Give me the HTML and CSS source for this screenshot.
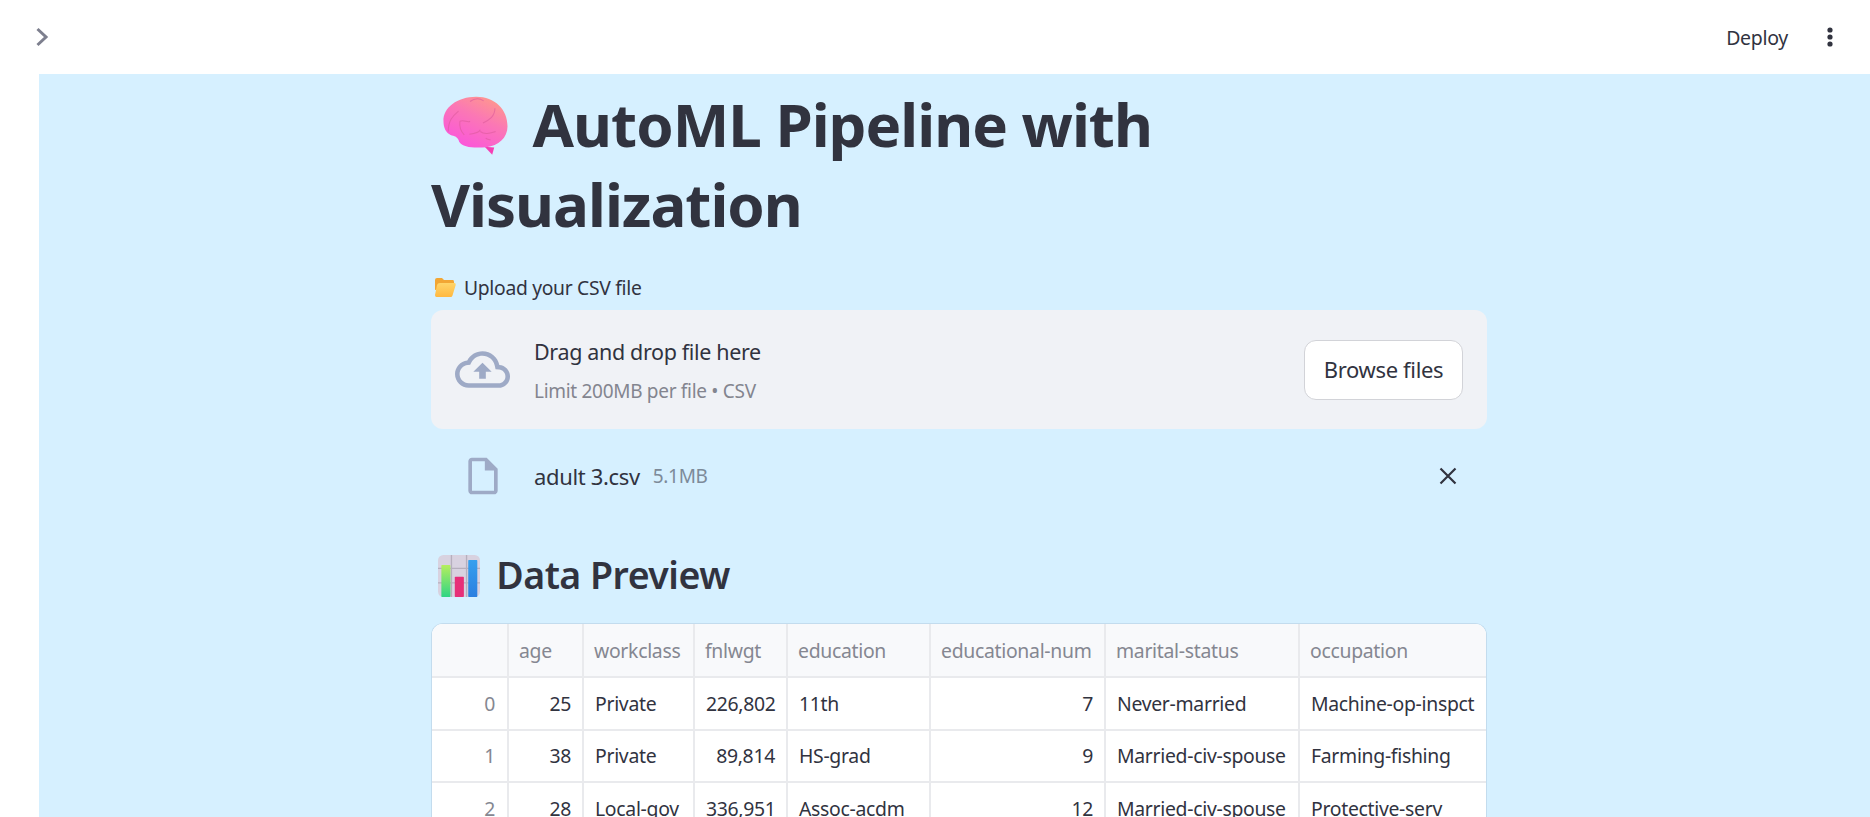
FILE: index.html
```html
<!DOCTYPE html>
<html lang="en">
<head>
<meta charset="UTF-8">
<meta name="viewport" content="width=device-width, initial-scale=1.0">
<title>AutoML Pipeline with Visualization</title>
<link rel="stylesheet" href="styles.css">
</head>
<body>

<header class="topbar">
  <svg class="chevron" viewBox="0 0 14 20" width="14" height="20">
    <path d="M2.5 2 L11 10 L2.5 18" fill="none" stroke="#7d7f8e" stroke-width="3"/>
  </svg>
  <div class="topbar-right">
    <span class="deploy">Deploy</span>
    <svg class="kebab" viewBox="0 0 8 22" width="8" height="22">
      <circle cx="4" cy="4" r="2.6" fill="#31333f"/>
      <circle cx="4" cy="11" r="2.6" fill="#31333f"/>
      <circle cx="4" cy="18" r="2.6" fill="#31333f"/>
    </svg>
  </div>
</header>

<main class="main">
  <div class="content">
    <h1 class="title">
      <svg class="brain" viewBox="40 20 196 182" width="67" height="62">
        <defs>
          <linearGradient id="brainFill" x1="0.9" y1="0" x2="0.3" y2="1">
            <stop offset="0" stop-color="#ff9e86"/>
            <stop offset="0.45" stop-color="#fb78b4"/>
            <stop offset="1" stop-color="#fb55dc"/>
          </linearGradient>
        </defs>
        <path d="M165 175 L193 177 L187 198 Z" fill="#f53fb4"/>
        <path d="M44 100 C42 60 85 28 140 28 C195 28 232 65 232 115 C232 150 205 172 170 176 C135 178 100 178 90 160 C87 145 75 143 65 140 C52 135 44 120 44 100 Z" fill="url(#brainFill)"/>
        <g fill="none" stroke="#dd5a9c" stroke-width="3" opacity="0.6">
          <path d="M122 42 C135 32 150 32 162 40"/>
          <path d="M58 130 C58 100 70 85 88 70"/>
          <path d="M195 62 C195 85 180 95 160 105"/>
          <path d="M92 100 C105 95 115 105 122 100"/>
          <path d="M92 100 C90 120 95 130 105 140"/>
          <path d="M120 138 C145 135 150 130 152 125 M152 130 C165 140 180 135 197 130"/>
          <path d="M168 150 C175 155 178 152 182 155"/>
        </g>
      </svg>
      AutoML Pipeline with Visualization
    </h1>

    <div class="upload-label">
      <svg class="folder" viewBox="0 0 21 19" width="21" height="19">
        <defs>
          <linearGradient id="folderFill" x1="0" y1="0" x2="0" y2="1">
            <stop offset="0" stop-color="#ffd56a"/>
            <stop offset="1" stop-color="#ffb840"/>
          </linearGradient>
        </defs>
        <path d="M0 2 Q0 0 2 0 L7 0 L9 2 L18 2 Q19 2 19 4 L19 8 L0 12 Z" fill="#f2a634"/>
        <path d="M5 5 L19.5 5 Q21 5 20.7 7 L17.5 17.5 Q17.2 19 15.5 19 L1.5 19 Q0 19 0 17 L2 7 Q2.5 5 5 5 Z" fill="url(#folderFill)"/>
      </svg>
      <span>Upload your CSV file</span>
    </div>

    <section class="dropzone">
      <svg class="cloud" viewBox="0 0 24 24" width="55" height="55">
        <path fill="#9eaac6" d="M19.35 10.04C18.67 6.59 15.64 4 12 4 9.11 4 6.6 5.64 5.35 8.04 2.34 8.36 0 10.91 0 14c0 3.31 2.69 6 6 6h13c2.76 0 5-2.24 5-5 0-2.64-2.05-4.78-4.65-4.96zM19 18H6c-2.21 0-4-1.79-4-4 0-2.05 1.53-3.76 3.56-3.97l1.07-.11.5-.95C8.08 7.14 9.94 6 12 6c2.62 0 4.88 1.86 5.39 4.43l.3 1.5 1.53.11c1.56.1 2.78 1.41 2.78 2.96 0 1.65-1.35 3-3 3zM8 13h2.55v3h2.9v-3H16l-4-4z"/>
      </svg>
      <div class="drop-text">
        <div class="drop-title">Drag and drop file here</div>
        <div class="drop-limit">Limit 200MB per file • CSV</div>
      </div>
      <button class="browse">Browse files</button>
    </section>

    <div class="file-row">
      <svg class="file-icon" viewBox="0 0 24 24" width="44" height="44">
        <path fill="#9eaac6" d="M14 2H6c-1.1 0-1.99.9-1.99 2L4 20c0 1.1.89 2 1.99 2H18c1.1 0 2-.9 2-2V8l-6-6zM6 20V4h7v5h5v11H6z"/>
      </svg>
      <span class="file-name">adult 3.csv</span>
      <span class="file-size">5.1MB</span>
      <svg class="file-remove" viewBox="0 0 18 18" width="18" height="18">
        <path d="M1.5 1.5 L16.5 16.5 M16.5 1.5 L1.5 16.5" fill="none" stroke="#31333f" stroke-width="2.2"/>
      </svg>
    </div>

    <h2 class="section-title">
      <svg class="chart" viewBox="25 25 125 125" width="42" height="42">
        <defs>
          <linearGradient id="barGreen" x1="0" y1="0" x2="0" y2="1">
            <stop offset="0" stop-color="#b5ee5e"/>
            <stop offset="1" stop-color="#2fd584"/>
          </linearGradient>
          <linearGradient id="barBlue" x1="0" y1="0" x2="0" y2="1">
            <stop offset="0" stop-color="#36a0ee"/>
            <stop offset="1" stop-color="#2c7fe0"/>
          </linearGradient>
        </defs>
        <rect x="25" y="25" width="125" height="125" rx="16" fill="#d8d2e0"/>
        <path d="M65 25 V150 M110 25 V150 M25 65 H150 M25 108 H150" stroke="#b5afbd" stroke-width="4" fill="none"/>
        <rect x="35" y="55" width="27" height="95" rx="2" fill="url(#barGreen)"/>
        <rect x="75" y="90" width="27" height="60" rx="2" fill="#e62f78"/>
        <rect x="115" y="40" width="27" height="110" rx="2" fill="url(#barBlue)"/>
      </svg>
      Data Preview
    </h2>

    <div class="table-wrap">
      <table class="preview">
        <colgroup>
          <col class="col-index">
          <col class="col-age">
          <col class="col-workclass">
          <col class="col-fnlwgt">
          <col class="col-education">
          <col class="col-edunum">
          <col class="col-marital">
          <col class="col-occupation">
        </colgroup>
        <thead>
          <tr>
            <th></th>
            <th>age</th>
            <th>workclass</th>
            <th>fnlwgt</th>
            <th>education</th>
            <th>educational-num</th>
            <th>marital-status</th>
            <th>occupation</th>
          </tr>
        </thead>
        <tbody>
          <tr>
            <td class="idx">0</td>
            <td class="num">25</td>
            <td>Private</td>
            <td class="num">226,802</td>
            <td>11th</td>
            <td class="num">7</td>
            <td>Never-married</td>
            <td>Machine-op-inspct</td>
          </tr>
          <tr>
            <td class="idx">1</td>
            <td class="num">38</td>
            <td>Private</td>
            <td class="num">89,814</td>
            <td>HS-grad</td>
            <td class="num">9</td>
            <td>Married-civ-spouse</td>
            <td>Farming-fishing</td>
          </tr>
          <tr>
            <td class="idx">2</td>
            <td class="num">28</td>
            <td>Local-gov</td>
            <td class="num">336,951</td>
            <td>Assoc-acdm</td>
            <td class="num">12</td>
            <td>Married-civ-spouse</td>
            <td>Protective-serv</td>
          </tr>
        </tbody>
      </table>
    </div>
  </div>
</main>

</body>
</html>
```

FILE: styles.css
```css
html, body {
  height: 100%;
  margin: 0;
  overflow: hidden;
}

body {
  font-family: "Noto Sans", sans-serif;
  color: #31333f;
  background-color: #fff;
}

.topbar {
  display: flex;
  align-items: center;
  justify-content: space-between;
  height: 74px;
  padding: 0 36px 0 35px;
  box-sizing: border-box;
}

.topbar-right {
  display: flex;
  align-items: center;
  gap: 38px;
}

.deploy {
  font-size: 19.5px;
  letter-spacing: -0.3px;
}

.main {
  margin-left: 39px;
  height: 743px;
  overflow: hidden;
  background-color: #d6f0ff;
}

.content {
  width: 1056px;
  margin-left: 392px;
  padding-top: 10px;
}

.title {
  margin: 0;
  font-size: 60px;
  line-height: 80px;
  font-weight: 700;
  letter-spacing: -1px;
}

.brain {
  vertical-align: -9px;
  margin-left: 11px;
  margin-right: 9px;
}

.upload-label {
  display: flex;
  align-items: center;
  gap: 8px;
  height: 30px;
  margin-top: 28px;
  padding-left: 4px;
  font-size: 19.3px;
  letter-spacing: -0.3px;
}

.dropzone {
  display: flex;
  align-items: center;
  height: 119px;
  margin-top: 8px;
  padding: 0 24px;
  border-radius: 12px;
  background-color: #f0f2f6;
}

.drop-text {
  flex: 1;
  margin-left: 24px;
}

.drop-title {
  font-size: 21.5px;
  line-height: 30px;
  letter-spacing: -0.35px;
}

.drop-limit {
  margin-top: 12px;
  font-size: 19px;
  line-height: 24px;
  letter-spacing: -0.3px;
  color: #83858f;
}

.browse {
  width: 159px;
  height: 60px;
  padding-bottom: 2px;
  border: 1px solid #d2d3d8;
  border-radius: 12px;
  background-color: #fff;
  font-family: inherit;
  font-size: 22px;
  letter-spacing: -0.35px;
  color: #31333f;
}

.file-row {
  display: flex;
  align-items: center;
  height: 60px;
  margin-top: 17px;
  padding: 0 30px 0 30px;
}

.file-name {
  margin-left: 29px;
  font-size: 22px;
  letter-spacing: -0.35px;
}

.file-size {
  flex: 1;
  margin-left: 13px;
  font-size: 19px;
  letter-spacing: -0.3px;
  color: #7d8a99;
}

.section-title {
  margin: 39px 0 0;
  font-size: 37.5px;
  line-height: 60px;
  font-weight: 600;
  letter-spacing: -0.5px;
}

.chart {
  vertical-align: -8px;
  margin-left: 7px;
  margin-right: 7px;
}

.table-wrap {
  margin-top: 18px;
  border: 1px solid #c3dcee;
  border-bottom: 0;
  border-radius: 12px 12px 0 0;
  overflow: hidden;
}

.preview {
  width: 100%;
  table-layout: fixed;
  border-collapse: collapse;
  background-color: #fff;
  font-size: 19.4px;
  letter-spacing: -0.3px;
}

.col-index { width: 76px; }
.col-age { width: 75px; }
.col-workclass { width: 111px; }
.col-fnlwgt { width: 93px; }
.col-education { width: 143px; }
.col-edunum { width: 175px; }
.col-marital { width: 194px; }

.preview th {
  height: 52px;
  padding: 0 10px;
  border-right: 2px solid #e9eaed;
  border-bottom: 2px solid #e9eaed;
  background-color: #f8f9fb;
  font-weight: 400;
  text-align: left;
  white-space: nowrap;
  color: #858791;
}

.preview td {
  height: 50.5px;
  padding: 0 11px;
  border-right: 2px solid #e9eaed;
  border-bottom: 2px solid #e9eaed;
  white-space: nowrap;
  overflow: hidden;
}

.preview th:last-child,
.preview td:last-child {
  border-right: 0;
}

.preview .num {
  text-align: right;
}

.preview .idx {
  padding-right: 12px;
  text-align: right;
  color: #858791;
}
```
